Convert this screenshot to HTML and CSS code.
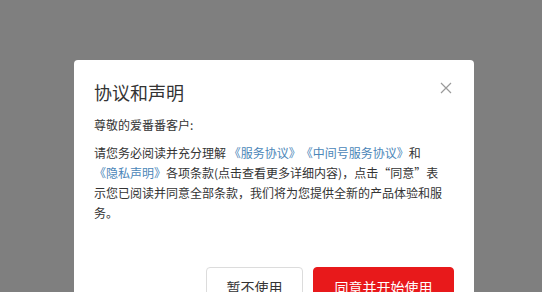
FILE: index.html
```html
<!DOCTYPE html>
<html lang="zh-CN">
<head>
    <meta charset="UTF-8">
    <title>协议和声明</title>
    <link rel="stylesheet" href="styles.css">
</head>
<body>
    <div class="modal">
        <div class="modal-header">
            <h3>协议和声明</h3>
            <a href="#" class="close" aria-label="关闭">
                <svg width="12" height="12" viewBox="0 0 12 12">
                    <path d="M1 1 L11 11 M11 1 L1 11" stroke="#9a9a9a" stroke-width="1.2" fill="none"/>
                </svg>
            </a>
        </div>
        <p class="greeting">尊敬的爱番番客户:</p>
        <p class="content">请您务必阅读并充分理解 <a href="#">《服务协议》</a><a href="#">《中间号服务协议》</a>和<a href="#">《隐私声明》</a>各项条款(点击查看更多详细内容)，点击<span class="quote open">“</span>同意<span class="quote close-q">”</span>表示您已阅读并同意全部条款，我们将为您提供全新的产品体验和服务。</p>
        <div class="buttons">
            <button class="cancel">暂不使用</button>
            <button class="agree">同意并开始使用</button>
        </div>
    </div>
</body>
</html>
```

FILE: styles.css
```css
body {
    margin: 0;
    padding: 0;
    background-color: #7f7f7f;
    font-family: "Noto Sans CJK SC", "Liberation Sans", sans-serif;
    color: #333;
    height: 100vh;
    overflow: hidden;
}
.modal {
    width: 400px;
    margin: 60px 0 0 74px;
    padding: 22px 20px 20px;
    background: #fff;
    border-radius: 4px;
    box-sizing: border-box;
}
.modal-header {
    display: flex;
    justify-content: space-between;
    align-items: center;
}
.modal-header h3 {
    margin: 0;
    font-size: 18px;
    font-weight: normal;
    line-height: 20px;
}
.close {
    display: flex;
    margin-right: 2px;
    margin-top: -8px;
}
.greeting {
    margin: 13px 0 0;
    font-size: 12px;
    line-height: 20px;
}
.content {
    margin: 8px 10px 0 0;
    font-size: 12px;
    line-height: 20px;
    text-spacing-trim: space-all;
}
.content a {
    color: #4a86b8;
    text-decoration: none;
}
.content .quote {
    display: inline-block;
    width: 12px;
}
.content .open {
    text-align: right;
}
.content .close-q {
    text-align: left;
}
.buttons {
    display: flex;
    justify-content: flex-end;
    gap: 10px;
    margin-top: 44px;
}
button {
    height: 40px;
    font-family: inherit;
    font-size: 14px;
    border-radius: 4px;
    cursor: pointer;
}
.cancel {
    width: 97px;
    background: #fff;
    color: #333;
    border: 1px solid #dcdcdc;
}
.agree {
    width: 141px;
    background: #e8191b;
    color: #fff;
    border: 1px solid #e8191b;
}
```
